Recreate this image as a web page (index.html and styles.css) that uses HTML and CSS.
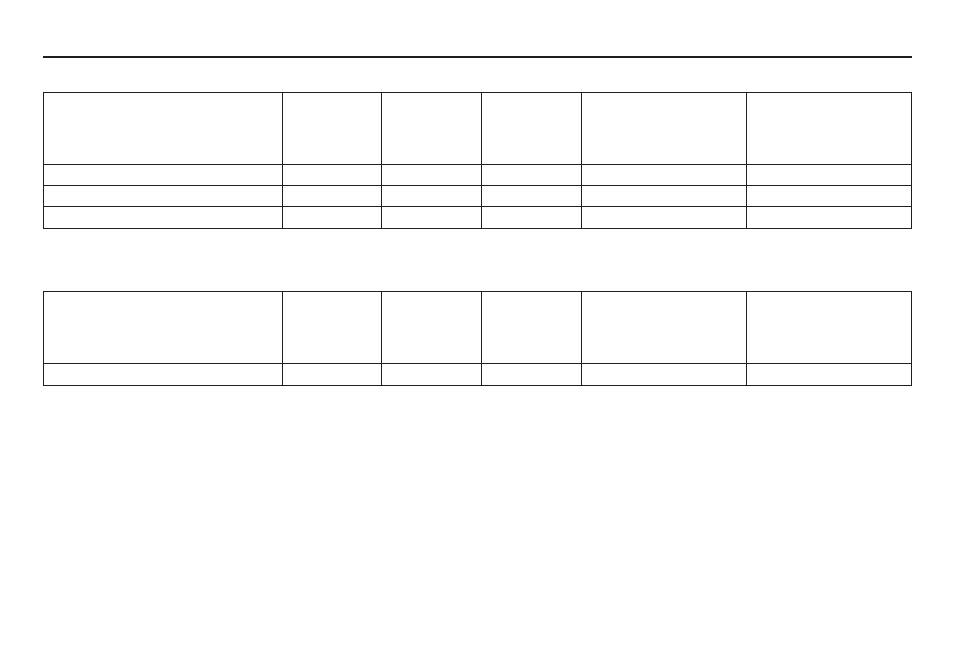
FILE: index.html
```html
<!DOCTYPE html>
<html>
<head>
<meta charset="utf-8">
<link rel="stylesheet" href="styles.css">
</head>
<body>
<div class="page">
  <div class="rule"></div>
  <div class="grid first">
    <div class="cell head"></div><div class="cell head"></div><div class="cell head"></div><div class="cell head"></div><div class="cell head"></div><div class="cell head"></div>
    <div class="cell"></div><div class="cell"></div><div class="cell"></div><div class="cell"></div><div class="cell"></div><div class="cell"></div>
    <div class="cell"></div><div class="cell"></div><div class="cell"></div><div class="cell"></div><div class="cell"></div><div class="cell"></div>
    <div class="cell last"></div><div class="cell last"></div><div class="cell last"></div><div class="cell last"></div><div class="cell last"></div><div class="cell last"></div>
  </div>
  <div class="grid second">
    <div class="cell head"></div><div class="cell head"></div><div class="cell head"></div><div class="cell head"></div><div class="cell head"></div><div class="cell head"></div>
    <div class="cell last"></div><div class="cell last"></div><div class="cell last"></div><div class="cell last"></div><div class="cell last"></div><div class="cell last"></div>
  </div>
</div>
</body>
</html>
```

FILE: styles.css
```css
html, body {
  margin: 0;
  padding: 0;
  background: #ffffff;
  font-family: "Liberation Sans", Arial, sans-serif;
}
.page {
  padding: 56px 0 0 43px;
  width: 869px;
}
.rule {
  height: 2px;
  background: #231f20;
  width: 869px;
}
.grid {
  display: grid;
  grid-template-columns: 239px 99px 100px 100px 165px 165px;
  border-left: 1px solid #231f20;
  border-top: 1px solid #231f20;
  width: 868px;
}
.first {
  margin-top: 34px;
  grid-template-rows: 72px 21px 21px 22px;
}
.second {
  margin-top: 62px;
  grid-template-rows: 72px 22px;
}
.cell {
  border-right: 1px solid #231f20;
  border-bottom: 1px solid #231f20;
  box-sizing: border-box;
}
```
